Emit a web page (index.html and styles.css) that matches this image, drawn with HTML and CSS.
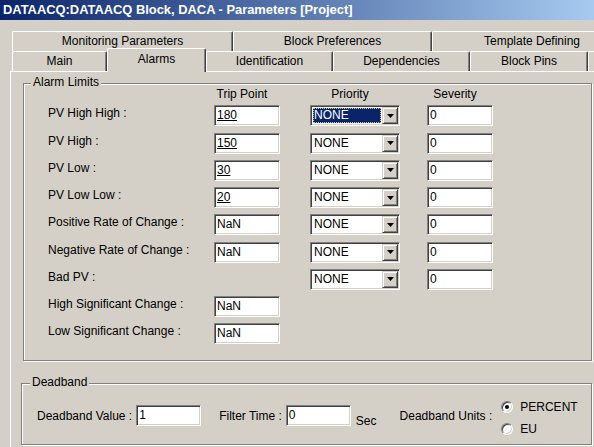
FILE: index.html
```html
<!DOCTYPE html>
<html>
<head>
<meta charset="utf-8">
<link rel="stylesheet" href="styles.css">
</head>
<body>
<div class="titlebar">DATAACQ:DATAACQ Block, DACA - Parameters [Project]</div>
<div class="main">
  <div class="tabs">
    <div class="tabrow">
      <div class="tab w-mon">Monitoring Parameters</div>
      <div class="tab w-pref">Block Preferences</div>
      <div class="tab w-tmpl">Template Defining</div>
    </div>
    <div class="tabrow">
      <div class="tab w-main">Main</div>
      <div class="tab active w-alarms">Alarms</div>
      <div class="tab w-ident">Identification</div>
      <div class="tab w-dep">Dependencies</div>
      <div class="tab w-pins">Block Pins</div>
      <div class="tab w-more"></div>
    </div>
  </div>
  <div class="panel">
    <div class="group alarm">
      <div class="legend">Alarm Limits</div>
      <div class="alarm-grid">
        <div class="hdr c-trip">Trip Point</div>
        <div class="hdr c-pri">Priority</div>
        <div class="hdr c-sev">Severity</div>

        <div class="lbl c-label">PV High High :</div>
        <div class="field c-trip"><u>180</u></div>
        <div class="combo c-pri"><span class="combo-text sel">NONE</span><span class="combo-btn"><svg width="7" height="4" viewBox="0 0 7 4"><polygon points="0,0 7,0 3.5,4" fill="#000"/></svg></span></div>
        <div class="field c-sev">0</div>

        <div class="lbl c-label">PV High :</div>
        <div class="field c-trip"><u>150</u></div>
        <div class="combo c-pri"><span class="combo-text">NONE</span><span class="combo-btn"><svg width="7" height="4" viewBox="0 0 7 4"><polygon points="0,0 7,0 3.5,4" fill="#000"/></svg></span></div>
        <div class="field c-sev">0</div>

        <div class="lbl c-label">PV Low :</div>
        <div class="field c-trip"><u>30</u></div>
        <div class="combo c-pri"><span class="combo-text">NONE</span><span class="combo-btn"><svg width="7" height="4" viewBox="0 0 7 4"><polygon points="0,0 7,0 3.5,4" fill="#000"/></svg></span></div>
        <div class="field c-sev">0</div>

        <div class="lbl c-label">PV Low Low :</div>
        <div class="field c-trip"><u>20</u></div>
        <div class="combo c-pri"><span class="combo-text">NONE</span><span class="combo-btn"><svg width="7" height="4" viewBox="0 0 7 4"><polygon points="0,0 7,0 3.5,4" fill="#000"/></svg></span></div>
        <div class="field c-sev">0</div>

        <div class="lbl c-label">Positive Rate of Change :</div>
        <div class="field c-trip">NaN</div>
        <div class="combo c-pri"><span class="combo-text">NONE</span><span class="combo-btn"><svg width="7" height="4" viewBox="0 0 7 4"><polygon points="0,0 7,0 3.5,4" fill="#000"/></svg></span></div>
        <div class="field c-sev">0</div>

        <div class="lbl c-label">Negative Rate of Change :</div>
        <div class="field c-trip">NaN</div>
        <div class="combo c-pri"><span class="combo-text">NONE</span><span class="combo-btn"><svg width="7" height="4" viewBox="0 0 7 4"><polygon points="0,0 7,0 3.5,4" fill="#000"/></svg></span></div>
        <div class="field c-sev">0</div>

        <div class="lbl c-label">Bad PV :</div>
        <div class="combo c-pri"><span class="combo-text">NONE</span><span class="combo-btn"><svg width="7" height="4" viewBox="0 0 7 4"><polygon points="0,0 7,0 3.5,4" fill="#000"/></svg></span></div>
        <div class="field c-sev">0</div>

        <div class="lbl c-label">High Significant Change :</div>
        <div class="field c-trip">NaN</div>

        <div class="lbl c-label">Low Significant Change :</div>
        <div class="field c-trip">NaN</div>
      </div>
    </div>
    <div class="group deadband">
      <div class="legend">Deadband</div>
      <div class="db-row">
        <span class="db-lbl">Deadband Value :</span>
        <div class="field db-field">1</div>
        <span class="db-lbl filter">Filter Time :</span>
        <div class="field db-field">0</div>
        <span class="sec">Sec</span>
        <span class="db-lbl units">Deadband Units :</span>
        <div class="radios">
          <div class="radio-item"><span class="radio checked"><span class="dot"></span></span><span>PERCENT</span></div>
          <div class="radio-item"><span class="radio"></span><span>EU</span></div>
        </div>
      </div>
    </div>
  </div>
</div>
</body>
</html>
```
FILE: styles.css
```css
* { box-sizing: border-box; }
html, body { margin: 0; padding: 0; }
body {
  width: 594px;
  height: 447px;
  overflow: hidden;
  background: #d4d0c8;
  font-family: "Liberation Sans", Arial, sans-serif;
  font-size: 12px;
  color: #000;
}
.titlebar {
  height: 20px;
  background: linear-gradient(to right, #0a246a 0%, #a6caf0 100%);
  color: #fff;
  font-weight: bold;
  font-size: 12.9px;
  line-height: 20px;
  padding-left: 3px;
  white-space: nowrap;
}
.main {
  padding: 11px 0 0 10px;
  height: 427px;
  overflow: hidden;
}
.tabs { margin-left: 2px; }
.tabrow { display: flex; height: 20px; }
.tab {
  flex: none;
  height: 20px;
  background: #d4d0c8;
  border-top: 1px solid #fff;
  border-left: 1px solid #fff;
  border-right: 1px solid #404040;
  box-shadow: inset -1px 0 0 #808080;
  border-radius: 2px 2px 0 0;
  text-align: center;
  line-height: 18px;
  white-space: nowrap;
  overflow: hidden;
}
.w-mon { width: 221px; }
.w-pref { width: 199px; }
.w-tmpl { width: 200px; }
.w-main { width: 95px; }
.w-alarms { width: 99px; }
.w-ident { width: 127px; }
.w-dep { width: 137px; }
.w-pins { width: 118px; }
.w-more { width: 30px; }
.tab.active {
  margin-top: -3px;
  height: 24px;
  line-height: 20px;
  z-index: 1;
}
.panel {
  border-top: 1px solid #fff;
  border-left: 1px solid #fff;
  height: 376px;
}
.group {
  border: 1px solid #808080;
  box-shadow: inset 1px 1px 0 #fff, 1px 1px 0 #fff;
}
.alarm {
  margin: 11px 0 0 12px;
  width: 569px;
  height: 278px;
}
.deadband {
  margin: 22px 0 0 10px;
  width: 571px;
  height: 62px;
}
.legend {
  display: table;
  margin: -8px 0 0 7px;
  padding: 0 2px;
  background: #d4d0c8;
  line-height: 13px;
}
.deadband .legend { margin-left: 8px; }
.alarm-grid {
  display: grid;
  grid-template-columns: 166px 96px 117px 66px;
  grid-template-rows: 10px repeat(9, 21px);
  row-gap: 6.25px;
  padding-left: 24px;
}
.c-label { grid-column: 1; }
.c-trip { grid-column: 2; }
.c-pri { grid-column: 3; }
.c-sev { grid-column: 4; }
.hdr {
  line-height: 10px;
  white-space: nowrap;
  text-align: center;
  padding-right: 10px;
}
.hdr.c-trip { width: 66px; }
.hdr.c-pri { width: 90px; }
.hdr.c-sev { width: 66px; }
.lbl {
  align-self: start;
  line-height: 16px;
  white-space: nowrap;
}
.field {
  width: 66px;
  height: 21px;
  background: #fff;
  border: 1px solid;
  border-color: #808080 #fff #fff #808080;
  box-shadow: inset 1px 1px 0 #404040, inset -1px -1px 0 #d4d0c8;
  padding-left: 2px;
  line-height: 19px;
  white-space: nowrap;
}
.combo {
  width: 90px;
  height: 21px;
  display: flex;
  background: #fff;
  border: 1px solid;
  border-color: #808080 #fff #fff #808080;
  box-shadow: inset 1px 1px 0 #404040, inset -1px -1px 0 #d4d0c8;
  padding: 1px;
}
.combo-text {
  flex: 1;
  margin: 1px;
  padding-left: 1px;
  line-height: 15px;
}
.combo-text.sel {
  background: #0a246a;
  color: #fff;
  outline: 1px dotted #c8c890;
  outline-offset: -1px;
}
.combo-btn {
  width: 16px;
  height: 17px;
  background: #d4d0c8;
  border: 1px solid;
  border-color: #d4d0c8 #404040 #404040 #d4d0c8;
  box-shadow: inset 1px 1px 0 #fff, inset -1px -1px 0 #808080;
  display: flex;
  align-items: center;
  justify-content: center;
}
.combo-btn svg { display: block; }
.db-row {
  display: flex;
  align-items: center;
  height: 21px;
  margin-top: 16px;
  padding-left: 15px;
}
.db-lbl { white-space: nowrap; line-height: 14px; }
.db-field { width: 65px; margin-left: 4px; }
.filter { margin-left: 18px; }
.sec {
  align-self: flex-end;
  line-height: 14px;
  margin: 0 0 -2px 5px;
}
.units { margin-left: 23px; }
.radios {
  display: flex;
  flex-direction: column;
  gap: 9px;
  margin: 5px 0 0 9px;
}
.radio-item {
  display: flex;
  align-items: center;
  gap: 7px;
  height: 13px;
  line-height: 13px;
}
.radio {
  width: 12px;
  height: 12px;
  border-radius: 50%;
  background: #fff;
  border: 1px solid;
  border-color: #808080 #fff #fff #808080;
  box-shadow: inset 1px 1px 0 #404040, inset -1px -1px 0 #d4d0c8;
  display: flex;
  align-items: center;
  justify-content: center;
}
.dot {
  width: 4px;
  height: 4px;
  border-radius: 50%;
  background: #000;
}
```
